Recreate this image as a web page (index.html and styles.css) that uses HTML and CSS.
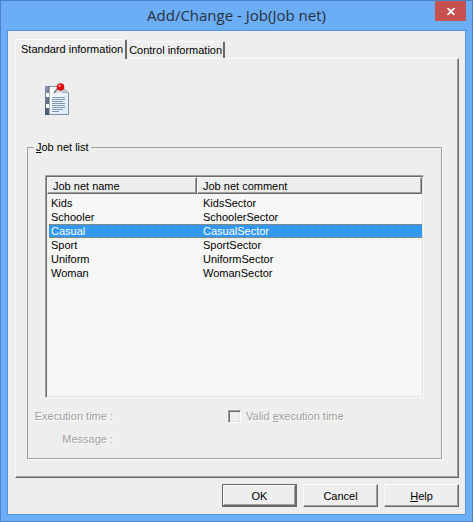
FILE: index.html
```html
<!DOCTYPE html>
<html lang="en">
  <head>
    <meta charset="UTF-8" />
    <meta name="viewport" content="width=device-width, initial-scale=1.0" />
    <title>Add/Change - Job(Job net)</title>
    <link rel="stylesheet" href="styles.css">
  </head>
  <body>
    <div class="window">
      <header class="titlebar">
        <h1>Add/Change - Job(Job net)</h1>
        <button class="close" aria-label="Close">
          <svg width="8" height="7" viewBox="0 0 8 7">
            <path d="M0.5 0 L7.5 7 M7.5 0 L0.5 7" stroke="#fff" stroke-width="1.8" />
          </svg>
        </button>
      </header>

      <main class="client">
        <div class="tabs" role="tablist">
          <button class="tab active" role="tab" aria-selected="true">Standard information</button>
          <button class="tab" role="tab" aria-selected="false">Control information</button>
        </div>

        <div class="panel" role="tabpanel">
          <svg class="job-icon" width="26" height="34" viewBox="0 0 26 34">
            <defs>
              <linearGradient id="paper" x1="0" y1="0" x2="1" y2="1">
                <stop offset="0" stop-color="#ffffff" />
                <stop offset="1" stop-color="#d5eafb" />
              </linearGradient>
              <linearGradient id="spine" x1="0" y1="0" x2="0" y2="1">
                <stop offset="0" stop-color="#8797ab" />
                <stop offset="1" stop-color="#46566b" />
              </linearGradient>
            </defs>
            <rect x="0" y="3" width="5" height="29" fill="url(#spine)" />
            <path d="M4 3 H17 L24 10 V32 H4 Z" fill="url(#paper)" />
            <path d="M4 3.500 H15 M23.500 10 V31.500 H4" fill="none" stroke="#8292a7" />
            <path d="M4 3 V32" stroke="#526278" />
            <path d="M17 4 V9.500 H23.500 Z" fill="#c4ced9" stroke="#8797a9" stroke-width="0.600" />
            <rect x="1" y="10" width="3" height="4" fill="#fff" />
            <rect x="1" y="21" width="3" height="4" fill="#fff" />
            <path d="M7 14.500 H20 M7 16.500 H20 M7 18.500 H18 M7 20.500 H20 M7 22.500 H20 M7 24.500 H20 M7 26.500 H18 M7 28.500 H14" stroke="#8095b1" />
            <path d="M9 10 L13 5" stroke="#6d7680" stroke-width="1.500" />
            <path d="M11 9.500 L17 8" stroke="#d2d4d8" stroke-width="2" />
            <circle cx="15.500" cy="4" r="3.800" fill="#e00909" />
            <circle cx="14.500" cy="2.800" r="1.200" fill="#ff9a8f" />
          </svg>

          <fieldset class="group">
            <legend><u>J</u>ob net list</legend>

            <div class="list">
              <table>
                <thead>
                  <tr>
                    <th class="name">Job net name</th>
                    <th>Job net comment</th>
                  </tr>
                </thead>
                <tbody>
                  <tr><td>Kids</td><td>KidsSector</td></tr>
                  <tr><td>Schooler</td><td>SchoolerSector</td></tr>
                  <tr class="selected"><td>Casual</td><td>CasualSector</td></tr>
                  <tr><td>Sport</td><td>SportSector</td></tr>
                  <tr><td>Uniform</td><td>UniformSector</td></tr>
                  <tr><td>Woman</td><td>WomanSector</td></tr>
                </tbody>
              </table>
            </div>

            <div class="details">
              <span class="caption">Execution time :</span>
              <input class="check" id="valid_time" type="checkbox" disabled />
              <label for="valid_time">Valid <u>e</u>xecution time</label>
            </div>
            <div class="details">
              <span class="caption">Message :</span>
            </div>
          </fieldset>
        </div>

        <div class="actions">
          <button class="btn default">OK</button>
          <button class="btn">Cancel</button>
          <button class="btn"><u>H</u>elp</button>
        </div>
      </main>
    </div>
  </body>
</html>
```

FILE: styles.css
```css
* {
  margin: 0px;
  padding: 0px;
  box-sizing: border-box;
}
body {
  font-family: "Liberation Sans", Arial, sans-serif;
  font-size: 11px;
  line-height: 14px;
  color: #000;
}
button {
  font: inherit;
  color: inherit;
  border: none;
}
u {
  text-underline-offset: 1px;
}

.window {
  min-height: 100vh;
  display: flex;
  flex-direction: column;
  padding: 0 6px 6px;
  border: 1px solid #4c83c2;
  background-color: #6badf6;
}

.titlebar {
  height: 29px;
  display: flex;
  align-items: flex-start;
}
.titlebar h1 {
  flex: 1;
  padding-left: 31px;
  font-family: "Open Sans", "Noto Sans", sans-serif;
  font-size: 15px;
  font-weight: normal;
  line-height: 29px;
  text-align: center;
  color: #27323e;
}
.close {
  width: 31px;
  height: 20px;
  display: flex;
  align-items: center;
  justify-content: center;
  background-color: #c75050;
}

.client {
  flex: 1;
  display: flex;
  flex-direction: column;
  padding: 8px 6px 7px 7px;
  border: 1px solid #5592d6;
  background-color: #eee;
}

/* tabs */
.tabs {
  display: flex;
  align-items: flex-end;
  height: 19px;
}
.tab {
  height: 17px;
  padding: 0 1px 0 2px;
  border-top: 1px solid #fafafa;
  border-right: 2px solid #696969;
  border-radius: 2px 2px 0 0;
  background-color: #eee;
  white-space: nowrap;
}
.tab.active {
  height: 20px;
  margin-bottom: -1px;
  padding: 0 2px 2px 5px;
  border-left: 1px solid #fafafa;
  z-index: 1;
}

.panel {
  flex: 1;
  padding: 24px 16px 18px 11px;
  border: 1px solid;
  border-color: #fafafa #696969 #696969 #fafafa;
  box-shadow: inset -1px -1px #a0a0a0;
}
.job-icon {
  display: block;
  margin-left: 18px;
}

.group {
  margin-top: 23px;
  padding: 21px 17px 12px;
  border: 1px solid #a0a0a0;
  box-shadow: 1px 1px #fafafa;
}
.group legend {
  margin-left: -11px;
  padding: 0 2px;
}

/* list view */
.list {
  min-height: 223px;
  border: 1px solid;
  border-color: #a0a0a0 #fafafa #fafafa #a0a0a0;
  background-color: #f7f7f7;
  box-shadow: inset 1px 1px #696969, inset -1px -1px #e3e3e3;
  padding: 1px;
}
table {
  width: 100%;
  table-layout: fixed;
  border-spacing: 0;
}
th {
  height: 17px;
  padding-left: 5px;
  border: 1px solid;
  border-color: #fafafa #696969 #696969 #fafafa;
  box-shadow: inset -1px -1px #a0a0a0;
  background-color: #eee;
  font-weight: normal;
  text-align: left;
}
.name {
  width: 150px;
}
td {
  height: 14px;
  padding-left: 6px;
}
td:first-child {
  padding-left: 2px;
  border-left: 2px solid #f7f7f7;
}
tbody::before {
  content: "";
  display: block;
  height: 2px;
}
.selected td {
  background-color: #3399ff;
  background-image:
    linear-gradient(90deg, #c87533 50%, #3399ff 50%),
    linear-gradient(90deg, #c87533 50%, #3399ff 50%);
  background-position: left top, left bottom;
  background-size: 2px 1px;
  background-repeat: repeat-x;
  color: #fff;
}

.details {
  display: flex;
  align-items: center;
  height: 14px;
  margin-top: 9px;
  color: #a0a0a0;
  text-shadow: 1px 1px #fff;
}
.list + .details {
  margin-top: 11px;
}
.caption {
  width: 68px;
  display: flex;
  justify-content: flex-end;
  white-space: nowrap;
}
.check {
  appearance: none;
  width: 13px;
  height: 13px;
  margin: 0 5px 0 115px;
  border: 1px solid;
  border-color: #a0a0a0 #fafafa #fafafa #a0a0a0;
  box-shadow: inset 1px 1px #696969, inset -1px -1px #e3e3e3;
}

/* bottom buttons */
.actions {
  display: flex;
  justify-content: flex-end;
  gap: 6px;
  margin-top: 6px;
}
.btn {
  width: 75px;
  height: 23px;
  border: 1px solid;
  border-color: #fafafa #696969 #696969 #fafafa;
  box-shadow: inset -1px -1px #a0a0a0;
  background-color: #eee;
}
.btn.default {
  border-color: #696969;
  box-shadow: inset -1px -1px #696969, inset 1px 1px #fafafa, inset -2px -2px #a0a0a0;
}
```
